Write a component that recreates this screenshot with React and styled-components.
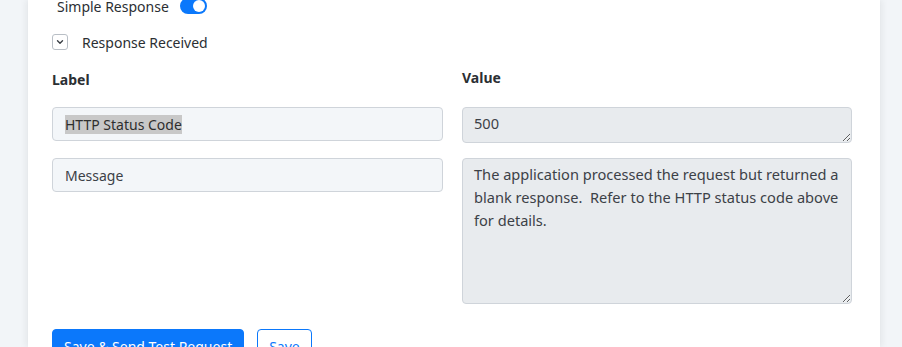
import styled, { createGlobalStyle } from "styled-components";

const GlobalStyle = createGlobalStyle`
    body {
        margin: 0;
        background: #f2f5f8;
        font-family: "Noto Sans", "Lato", sans-serif;
        color: #2b2f33;
    }
`;

const Card = styled.div`
    margin-left: 28px;
    width: 852px;
    height: 347px;
    box-sizing: border-box;
    background: #ffffff;
    box-shadow: -3px 0 6px rgba(0, 0, 0, 0.05), 3px 0 6px rgba(0, 0, 0, 0.05);
    padding: 0 28px 0 24px;
    overflow: hidden;
`;

const ToggleRow = styled.div`
    display: flex;
    align-items: center;
    gap: 11px;
    margin-top: -4px;
    padding-left: 5px;
    height: 20px;
    font-size: 14px;
`;

const Switch = styled.span`
    width: 27px;
    height: 16px;
    border-radius: 8px;
    background: ${(props) => (props.on ? "#0b78fb" : "#ced4da")};
    display: flex;
    align-items: center;
    justify-content: ${(props) => (props.on ? "flex-end" : "flex-start")};
    padding: 0 2px;
    box-sizing: border-box;

    &::after {
        content: "";
        width: 12px;
        height: 12px;
        border-radius: 50%;
        background: #ffffff;
    }
`;

const CollapseRow = styled.div`
    display: flex;
    align-items: center;
    gap: 14px;
    margin-top: 16px;
    height: 20px;
    font-size: 14px;
`;

const ChevronBox = styled.span`
    width: 16px;
    height: 16px;
    box-sizing: border-box;
    border: 1px solid #b9bfc6;
    border-radius: 3px;
    display: flex;
    align-items: center;
    justify-content: center;
`;

const Grid = styled.div`
    display: grid;
    grid-template-columns: 391px 390px;
    column-gap: 19px;
    margin-top: 16px;
`;

const Column = styled.div`
    display: flex;
    flex-direction: column;
    gap: ${(props) => props.gap}px;
`;

const Heading = styled.div`
    font-weight: 700;
    font-size: 14px;
    height: 20px;
    line-height: 20px;
    margin-top: ${(props) => props.top || 0}px;
    margin-bottom: ${(props) => props.bottom || 0}px;
`;

const Field = styled.div`
    height: 34px;
    box-sizing: border-box;
    border: 1px solid #cfd4da;
    border-radius: 4px;
    background: #f3f6f9;
    padding: 0 12px;
    display: flex;
    align-items: center;
    font-size: 14px;
    color: #3c4147;
`;

const Highlight = styled.span`
    background: #c8c8c8;
    color: #2e2e2e;
`;

const Area = styled.textarea`
    height: ${(props) => props.h}px;
    box-sizing: border-box;
    border: 1px solid #cfd4da;
    border-radius: 4px;
    background: #e8ebee;
    padding: 4px 7px 4px 11px;
    font-family: "Noto Sans", "Lato", sans-serif;
    font-size: 14.6px;
    line-height: 23px;
    color: #3c4147;
    resize: vertical;
    outline: none;
`;

const Buttons = styled.div`
    display: flex;
    gap: 13px;
    margin-top: 25px;
`;

const Button = styled.button`
    height: 34px;
    box-sizing: border-box;
    border-radius: 4px;
    border: 1px solid #0b78fb;
    background: ${(props) => (props.primary ? "#0b78fb" : "#ffffff")};
    color: ${(props) => (props.primary ? "#ffffff" : "#0b78fb")};
    font-family: "Noto Sans", "Lato", sans-serif;
    font-size: 14px;
    padding: 0 11px;
    cursor: pointer;
`;

export default function App() {
    return (
        <>
            <GlobalStyle />
            <Card>
                <ToggleRow>
                    Simple Response
                    <Switch on />
                </ToggleRow>
                <CollapseRow>
                    <ChevronBox>
                        <svg width="10" height="10" viewBox="0 0 10 10">
                            <path d="M2.5 3.8 L5 6.3 L7.5 3.8" fill="none" stroke="#3a3f45" strokeWidth="1.4" strokeLinecap="round" strokeLinejoin="round" />
                        </svg>
                    </ChevronBox>
                    Response Received
                </CollapseRow>
                <Grid>
                    <Column gap={17}>
                        <Heading top={2}>Label</Heading>
                        <Field><Highlight>HTTP Status Code</Highlight></Field>
                        <Field>Message</Field>
                    </Column>
                    <Column gap={15}>
                        <Heading bottom={4}>Value</Heading>
                        <Area h={36} readOnly value="500" />
                        <Area
                            h={146}
                            readOnly
                            value="The application processed the request but returned a blank response.  Refer to the HTTP status code above for details."
                        />
                    </Column>
                </Grid>
                <Buttons>
                    <Button primary>Save &amp; Send Test Request</Button>
                    <Button>Save</Button>
                </Buttons>
            </Card>
        </>
    );
}
